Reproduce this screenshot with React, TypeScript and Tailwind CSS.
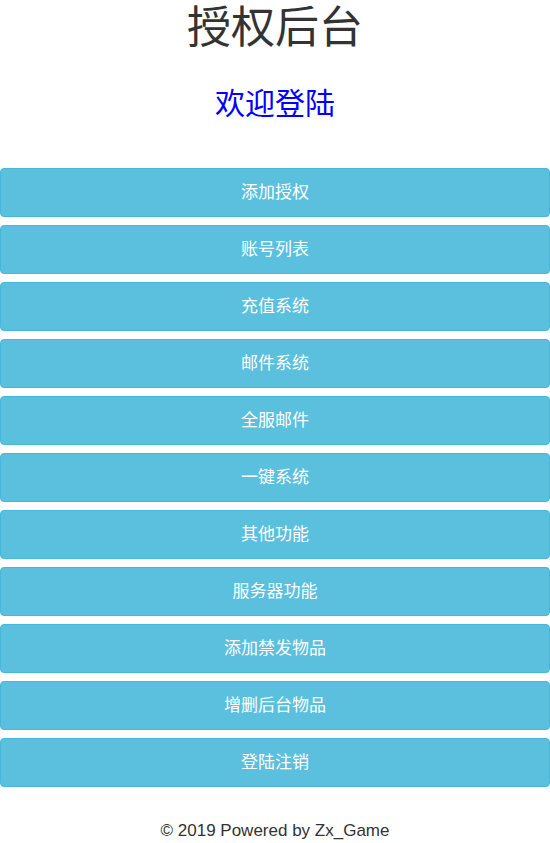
const items = [
  "添加授权",
  "账号列表",
  "充值系统",
  "邮件系统",
  "全服邮件",
  "一键系统",
  "其他功能",
  "服务器功能",
  "添加禁发物品",
  "增删后台物品",
  "登陆注销",
];

const App = () => {
  return (
    <div className="w-[550px] min-h-[843px] bg-white font-['Liberation_Sans','Noto_Sans_CJK_SC',sans-serif] text-[#333]">
      <h1 className="text-center text-[44px] leading-[56px] font-normal">授权后台</h1>
      <h2 className="mt-[24px] text-center text-[30px] leading-[48px] text-[#0000ff]">欢迎登陆</h2>
      <div className="mt-[40px] flex flex-col gap-[8px]">
        {items.map((t) => (
          <button
            key={t}
            className="h-[49px] w-full rounded-[4px] border border-[#46b8da] bg-[#5bc0de] text-[17px] text-white"
          >
            {t}
          </button>
        ))}
      </div>
      <p className="mt-[32px] text-center text-[17px] leading-[24px]">© 2019 Powered by Zx_Game</p>
    </div>
  );
};

export default App;
